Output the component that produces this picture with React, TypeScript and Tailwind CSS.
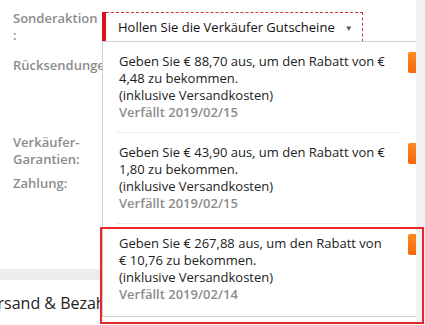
import React from 'react';

type Coupon = {
  lines: string[];
  expires: string;
};

const coupons: Coupon[] = [
  {
    lines: ['Geben Sie € 88,70 aus, um den Rabatt von €', '4,48 zu bekommen.', '(inklusive Versandkosten)'],
    expires: 'Verfällt 2019/02/15',
  },
  {
    lines: ['Geben Sie € 43,90 aus, um den Rabatt von €', '1,80 zu bekommen.', '(inklusive Versandkosten)'],
    expires: 'Verfällt 2019/02/15',
  },
  {
    lines: ['Geben Sie € 267,88 aus, um den Rabatt von', '€ 10,76 zu bekommen.', '(inklusive Versandkosten)'],
    expires: 'Verfällt 2019/02/14',
  },
];

const CouponItem = ({ coupon, last }: { coupon: Coupon; last: boolean }) => (
  <div className={last ? 'relative' : 'relative border-b border-[#ececec] mr-[16px]'}>
    <div className="pl-[3px] py-[11px] text-[13px] leading-[17px] text-[#222]">
      {coupon.lines.map((l) => (
        <div key={l} className="whitespace-nowrap">{l}</div>
      ))}
      <div className="font-semibold text-[#8c8c8c]">{coupon.expires}</div>
    </div>
    {/* orange action tab, clipped by the panel edge */}
    <div className={`absolute top-[10px] ${last ? 'right-[-8px]' : 'right-[-24px]'} w-[16px] h-[21px] rounded-[2px] bg-gradient-to-b from-[#ff8a1f] to-[#f7650a]`} />
  </div>
);

export default function App() {
  return (
    <div
      className="relative w-[425px] h-[325px] overflow-hidden bg-white flex"
      style={{ fontFamily: '"Open Sans", "Noto Sans", sans-serif' }}
    >
      <div className="relative w-[416px] h-full flex flex-col">
        <div className="flex items-start mt-[10px]">
          <div className="w-[102px] pl-[13px] text-[13px] leading-[17px] font-semibold text-[#8c8c8c]">
            <div>Sonderaktion</div>
            <div>:</div>
          </div>
          <div className="relative mt-[2px] z-10">
            <div className="flex items-center h-[30px] w-[261px]">
              <div className="w-[4px] h-full bg-[#d4141b]" />
              <div className="flex items-center h-full flex-1 border-t border-r border-dashed border-[#c0393b] pl-[12px] text-[13px] text-[#111]">
                <span className="whitespace-nowrap">Hollen Sie die Verkäufer Gutscheine</span>
                <span className="ml-[10px] text-[8px] text-[#555]">▼</span>
              </div>
            </div>
            <div className="absolute left-0 top-[29px] w-[314px] h-[276px] bg-white border-t border-l border-b border-[#cfcfcf] overflow-hidden pl-[13px]">
              {coupons.map((c, i) => (
                <CouponItem key={c.expires + i} coupon={c} last={i === coupons.length - 1} />
              ))}
            </div>
          </div>
        </div>

        <div className="pl-[13px] text-[13px] leading-[17px] font-semibold text-[#8c8c8c] whitespace-nowrap">
          <div className="mt-[13px]">Rücksendungen</div>
          <div className="mt-[60px]">Verkäufer-</div>
          <div>Garantien:</div>
          <div className="mt-[7px]">Zahlung:</div>
        </div>

        <div className="absolute left-0 right-0 top-[269px] h-[11px] bg-[#ededed]" />
        <div className="absolute left-[-21px] top-[293px] text-[16px] leading-[20px] text-[#222] whitespace-nowrap">
          Versand &amp; Bezahlung
        </div>
      </div>
      <div className="w-[9px] h-full bg-[#f2f2f2]" />

      {/* highlight frame around the last coupon */}
      <div className="absolute left-[100px] top-[227px] w-[324px] h-[97px] border-2 border-[#e5262a] z-20 pointer-events-none" />
    </div>
  );
}
